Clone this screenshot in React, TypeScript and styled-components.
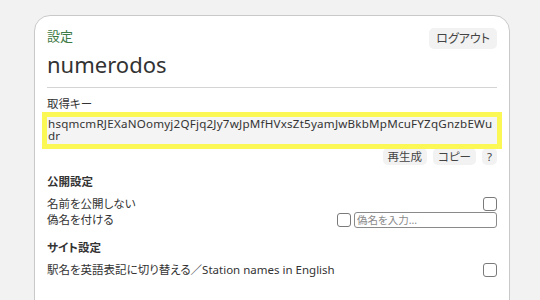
import React from "react";
import styled, { createGlobalStyle } from "styled-components";

const Global = createGlobalStyle`
  html, body { margin: 0; padding: 0; background: #f2f2f2; }
  body {
    font-family: "Noto Sans", "Noto Sans CJK JP", sans-serif;
    font-feature-settings: "palt";
    color: #333;
    overflow: hidden;
  }
`;

const Card = styled.div`
  margin: 15px 0 0 34px;
  width: 450px;
  height: 320px;
  background: #fff;
  border: 1px solid #c9c9c9;
  border-radius: 16px;
  padding: 11px 12px 0 12px;
`;

const Header = styled.div`
  display: flex;
  justify-content: space-between;
  align-items: flex-start;
  padding-bottom: 7px;
  border-bottom: 1px solid #d4d4d4;
`;

const TitleBlock = styled.div`
  display: flex;
  flex-direction: column;
`;

const Kicker = styled.div`
  font-size: 13px;
  line-height: 18px;
  color: #3d7a45;
`;

const UserName = styled.div`
  font-size: 22px;
  line-height: 32px;
  margin-top: 3px;
  color: #333;
`;

const SmallButton = styled.button`
  font-family: inherit;
  font-feature-settings: "palt";
  font-size: 11.5px;
  color: #444;
  background: #f2f2f2;
  border: none;
  border-radius: 5px;
  padding: 0 5px;
  height: 17px;
  line-height: 17px;
  cursor: pointer;
`;

const LogoutButton = styled(SmallButton)`
  margin-top: 1px;
  height: 21px;
  line-height: 21px;
  font-size: 12px;
  padding: 0 7px;
`;

const FieldLabel = styled.div`
  font-size: 11.5px;
  line-height: 16px;
  margin-top: 8px;
  color: #333;
`;

const KeyBox = styled.div`
  margin-top: 5px;
  background: #f4f4f4;
  outline: 5px solid #fbf856;
  padding: 1px 1px 2px 1px;
  font-size: 11.6px;
  letter-spacing: 0.22px;
  line-height: 12px;
  color: #333;
  word-break: break-all;
`;

const KeyActions = styled.div`
  display: flex;
  justify-content: flex-end;
  gap: 6px;
  margin-top: 4px;
`;

const SectionTitle = styled.div<{ $gap: number }>`
  font-size: 11.5px;
  font-weight: bold;
  line-height: 16px;
  margin-top: ${(p) => p.$gap}px;
  margin-bottom: 6px;
`;

const OptionRow = styled.div`
  display: flex;
  align-items: center;
  justify-content: space-between;
  font-size: 11.5px;
  line-height: 16px;
  height: 16px;
`;

const Controls = styled.div`
  display: flex;
  align-items: center;
  gap: 3px;
`;

const Check = styled.span`
  display: inline-block;
  box-sizing: border-box;
  width: 14px;
  height: 14px;
  border: 1px solid #7a7a7a;
  border-radius: 3px;
  background: #fff;
`;

const AliasInput = styled.input`
  box-sizing: border-box;
  width: 143px;
  height: 16px;
  border: 1px solid #8a8a8a;
  border-radius: 3px;
  font-family: inherit;
  font-feature-settings: "palt";
  font-size: 10.5px;
  padding: 0 2px;
  color: #333;
  &::placeholder { color: #8a8a8a; }
`;

export default function App() {
  return (
    <>
      <Global />
      <Card>
        <Header>
          <TitleBlock>
            <Kicker>設定</Kicker>
            <UserName>numerodos</UserName>
          </TitleBlock>
          <LogoutButton>ログアウト</LogoutButton>
        </Header>
        <FieldLabel>取得キー</FieldLabel>
        <KeyBox>hsqmcmRJEXaNOomyj2QFjq2Jy7wJpMfHVxsZt5yamJwBkbMpMcuFYZqGnzbEWudr</KeyBox>
        <KeyActions>
          <SmallButton>再生成</SmallButton>
          <SmallButton>コピー</SmallButton>
          <SmallButton>?</SmallButton>
        </KeyActions>
        <SectionTitle $gap={9}>公開設定</SectionTitle>
        <OptionRow>
          <span>名前を公開しない</span>
          <Check />
        </OptionRow>
        <OptionRow>
          <span>偽名を付ける</span>
          <Controls>
            <Check />
            <AliasInput placeholder="偽名を入力..." />
          </Controls>
        </OptionRow>
        <SectionTitle $gap={12}>サイト設定</SectionTitle>
        <OptionRow>
          <span>駅名を英語表記に切り替える／Station names in English</span>
          <Check />
        </OptionRow>
      </Card>
    </>
  );
}
